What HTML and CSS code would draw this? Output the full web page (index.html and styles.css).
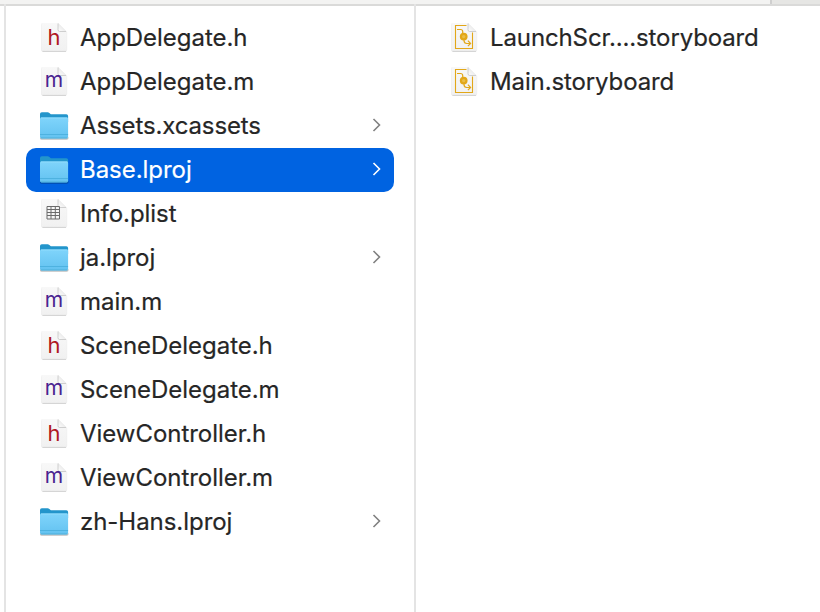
FILE: index.html
```
<!DOCTYPE html>
<html lang="en">
<head>
<meta charset="utf-8">
<title>Finder</title>
<link rel="stylesheet" href="styles.css">
</head>
<body>
<svg class="defs" width="0" height="0">
  <defs>
    <linearGradient id="paper" x1="0" y1="0" x2="0" y2="1"><stop offset="0" stop-color="#f8f8f8"/><stop offset="1" stop-color="#f1f1f1"/></linearGradient>
    <linearGradient id="fold" x1="0" y1="1" x2="1" y2="0"><stop offset="0" stop-color="#ffffff"/><stop offset=".5" stop-color="#ececec"/></linearGradient>
    <linearGradient id="blue" x1="0" y1="0" x2="0" y2="1"><stop offset="0" stop-color="#7fd4fb"/><stop offset="1" stop-color="#63c2f0"/></linearGradient>
    <symbol id="page" viewBox="0 0 30 32">
      <path d="M3 1H18L27.200 10V28q0 1.800-1.700 1.800H2.700Q1 29.800 1 28V3Q1 1 3 1z" fill="#000" opacity=".07"/>
      <path d="M3 1H18L26.700 9.500V27.700q0 1.300-1.300 1.300H2.800q-1.300 0-1.300-1.300V2.300Q1.500 1 3 1z" fill="url(#paper)"/>
      <path d="M2.500 29.400H26" stroke="#c9c9c9" stroke-width=".8"/>
      <path d="M18 1V7.800q0 1.700 1.700 1.700h7z" fill="url(#fold)"/>
      <path d="M18 1.500V7.800q0 1.700 1.700 1.700H26" fill="none" stroke="#c4c4c4" stroke-width=".8"/>
    </symbol>
    <symbol id="folder" viewBox="0.5 0 30 32">
      <path d="M.7 27.200q0 2 1.500 2h24.900q1.500 0 1.500-2" fill="none" stroke="#000" stroke-opacity=".25" stroke-width="1.200"/>
      <path d="M.5 4q0-1.800 1.800-1.800h5.800q1 0 1.800.8l.8.700q.6.500 1.500.500h14.600q1.800 0 1.800 1.800V12H.5z" fill="#2395cb"/>
      <path d="M.5 9q0-1.400 1.400-1.400h25.300q1.400 0 1.400 1.400v17.800q0 1.600-1.600 1.600H2.100Q.5 28.400 .5 26.800z" fill="url(#blue)"/>
      <path d="M1.500 7.900H27.800" stroke="#a2e2ff" stroke-width=".7"/>
      <path d="M.5 24.500H28.600" stroke="#43a9d9" stroke-width=".7"/>
      <path d="M1.500 28.100H27.800" stroke="#429fc9" stroke-width=".7"/>
    </symbol>
    <symbol id="plist" viewBox="0 0 30 32">
      <use href="#page"/>
      <path d="M7 8.500H19.500V21H7zM7 11.500H19.500M7 14.500H19.500M7 17.500H19.500M11 8.500V21M15.300 8.500V21" fill="none" stroke="#6a6a6a" stroke-width="1"/>
    </symbol>
    <symbol id="story" viewBox="0 0 30 32">
      <use href="#page"/>
      <path d="M16.500 3.500H5.500V26.500H22.500V10.500" fill="none" stroke="#e2a719" stroke-width="1.100"/>
      <path d="M7 7.500h3.500q2.200 0 2.200 2V12M14 17v1.500q0 3 2.800 3h3.500M17.900 18.700l2.700 2.800-2.700 2.700" fill="none" stroke="#e2a719" stroke-width="1.200"/>
      <circle cx="13.700" cy="14.600" r="2.800" fill="#e9bd48" stroke="#e2a719" stroke-width="2.200"/>
    </symbol>
    <symbol id="chev" viewBox="0 0 10 16"><path d="M1.500 2L7.500 8L1.500 14" fill="none" stroke="currentColor" stroke-width="1.600"/></symbol>
  </defs>
</svg>
<div class="window">
  <header class="toolbar"><span class="tab"></span><span class="tab other"></span></header>
  <main class="columns">
    <ul class="column first">
      <li class="row"><span class="icon h"><svg><use href="#page"/></svg><b>h</b></span><span class="name">AppDelegate.h</span></li>
      <li class="row"><span class="icon m"><svg><use href="#page"/></svg><b>m</b></span><span class="name">AppDelegate.m</span></li>
      <li class="row"><span class="icon"><svg><use href="#folder"/></svg></span><span class="name tight">Assets.xcassets</span><svg class="chevron"><use href="#chev"/></svg></li>
      <li class="row selected"><span class="icon"><svg><use href="#folder"/></svg></span><span class="name">Base.lproj</span><svg class="chevron"><use href="#chev"/></svg></li>
      <li class="row"><span class="icon"><svg><use href="#plist"/></svg></span><span class="name">Info.plist</span></li>
      <li class="row"><span class="icon"><svg><use href="#folder"/></svg></span><span class="name">ja.lproj</span><svg class="chevron"><use href="#chev"/></svg></li>
      <li class="row"><span class="icon m"><svg><use href="#page"/></svg><b>m</b></span><span class="name">main.m</span></li>
      <li class="row"><span class="icon h"><svg><use href="#page"/></svg><b>h</b></span><span class="name">SceneDelegate.h</span></li>
      <li class="row"><span class="icon m"><svg><use href="#page"/></svg><b>m</b></span><span class="name">SceneDelegate.m</span></li>
      <li class="row"><span class="icon h"><svg><use href="#page"/></svg><b>h</b></span><span class="name">ViewController.h</span></li>
      <li class="row"><span class="icon m"><svg><use href="#page"/></svg><b>m</b></span><span class="name">ViewController.m</span></li>
      <li class="row"><span class="icon"><svg><use href="#folder"/></svg></span><span class="name">zh-Hans.lproj</span><svg class="chevron"><use href="#chev"/></svg></li>
    </ul>
    <ul class="column">
      <li class="row"><span class="icon"><svg><use href="#story"/></svg></span><span class="name tight">LaunchScr....storyboard</span></li>
      <li class="row"><span class="icon"><svg><use href="#story"/></svg></span><span class="name tight">Main.storyboard</span></li>
    </ul>
  </main>
</div>
</body>
</html>
```
FILE: styles.css
```
* { box-sizing: border-box; }
body {
  margin: 0;
  background: #fff;
  color: #262626;
  font: 24px/44px Inter, "Liberation Sans", sans-serif;
  -webkit-text-stroke: .2px currentColor;
}
.defs { position: absolute; }
.window { display: flex; flex-direction: column; height: 612px; overflow: hidden; }
.toolbar { display: flex; height: 6px; border-bottom: 2px solid #dadad9; background: #f3f3f2; }
.tab { flex: 0 0 770px; }
.tab.other { flex: 1; border-left: 2px solid #cfcfcf; background: #e6e6e4; }
.columns { display: flex; flex: 1; margin-top: -2px; padding-left: 4px; }
.column { flex: 1; margin: 0; padding: 12px 20px 0; border-left: 2px solid #e4e4e4; list-style: none; }
.column.first { flex: 0 0 410px; }
.row { display: flex; align-items: center; height: 44px; padding: 0 12px 0 14px; border-radius: 10px; }
.selected { background: #0063e1; color: #fff; }
.name { flex: 1; margin-left: 10px; letter-spacing: -.04px; white-space: nowrap; }
.name.tight { letter-spacing: -.12px; }
.icon { display: grid; width: 30px; height: 32px; }
.icon svg { grid-area: 1 / 1; width: 30px; height: 32px; overflow: visible; }
.icon b {
  grid-area: 1 / 1;
  width: 28px;
  text-align: center;
  font-weight: 400;
  font-size: 22px;
  line-height: 31px;
  -webkit-text-stroke: 0;
}
.h b { color: #b01823; }
.m b { color: #4a2390; font-size: 21px; line-height: 28px; }
.chevron { width: 10px; height: 16px; margin-bottom: 2px; color: #808080; }
.selected .chevron { color: #fff; }
```
